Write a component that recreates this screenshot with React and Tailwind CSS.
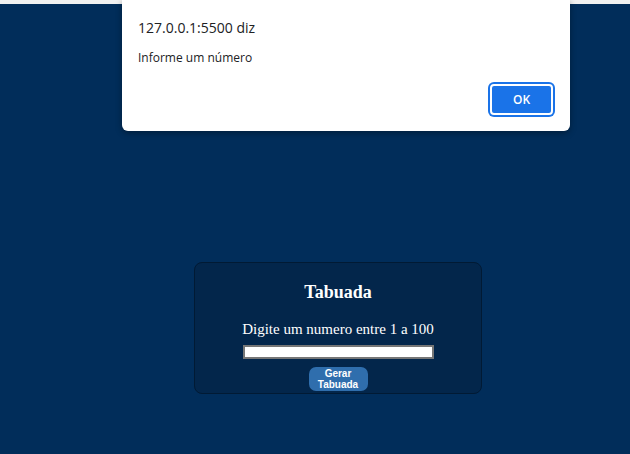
export default function App() {
  return (
    <div className="relative w-[630px] h-[454px] overflow-hidden bg-[#012d5a]">
      <div className="h-[4px] bg-[#f1f1f1]" />

      <div className="ml-[194px] mt-[258px] w-[288px] h-[132px] rounded-[8px] bg-[#03264b] border border-[#011a34] flex flex-col items-center text-white">
        <h1 className="mt-[18px] text-[18px] font-bold leading-[22px] font-['Liberation_Serif',serif]">Tabuada</h1>
        <p className="mt-[17px] text-[15px] leading-[18px] font-['Liberation_Serif',serif]">Digite um numero entre 1 a 100</p>
        <input
          type="text"
          className="mt-[7px] w-[191px] h-[14px] bg-white border-2 border-[#767676] outline-none"
        />
        <button className="mt-[8px] w-[59px] h-[24px] rounded-[7px] bg-[#2f6ead] text-white text-[10px] leading-[11px] font-bold font-['Liberation_Sans',sans-serif] flex items-center justify-center">
          Gerar<br />Tabuada
        </button>
      </div>

      <div className="absolute left-[122px] top-0 w-[448px] h-[131px] bg-white rounded-b-[6px] shadow-[0_2px_6px_rgba(0,0,0,0.35)] font-['Open_Sans','Noto_Sans',sans-serif]">
        <div className="pl-[16px] pt-[18px] text-[14px] leading-[20px] text-[#202124]">127.0.0.1:5500 diz</div>
        <div className="pl-[16px] pt-[12px] text-[12px] leading-[16px] text-[#202124]">Informe um número</div>
        <div className="flex justify-end pr-[17px] pt-[18px]">
          <button className="w-[63px] h-[31px] rounded-[4px] bg-[#1a73e8] border-2 border-white ring-2 ring-[#1a73e8] text-white text-[12px] font-semibold">
            OK
          </button>
        </div>
      </div>
    </div>
  );
}
